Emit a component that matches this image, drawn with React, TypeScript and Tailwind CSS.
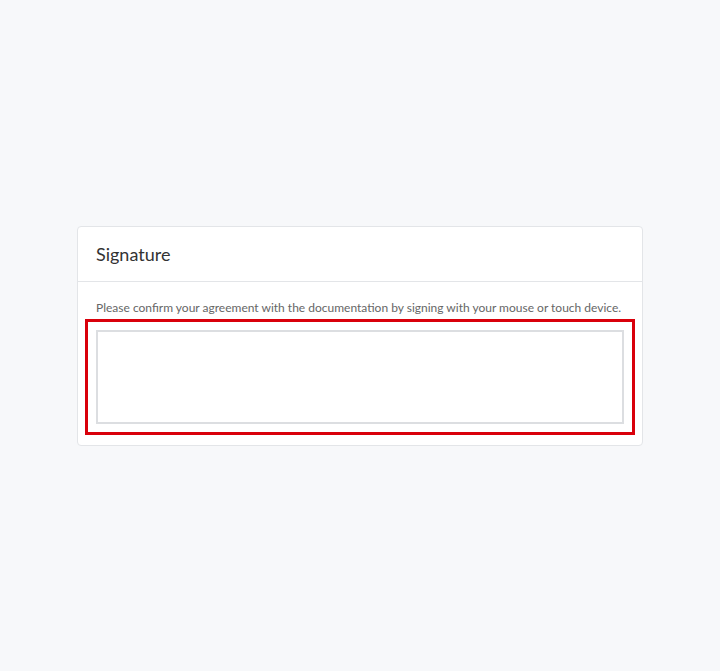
import React from 'react';

export default function App() {
  return (
    <div
      className="min-h-[671px] w-full bg-[#f7f8fa] flex items-center justify-center"
      style={{ fontFamily: 'Lato, "Open Sans", sans-serif' }}
    >
      <div className="w-[566px] bg-white border border-[#e3e5e8] rounded-[4px]">
        <div className="h-[55px] px-[18px] flex items-center border-b border-[#e3e5e8]">
          <h2 className="text-[18px] text-[#333] leading-none">Signature</h2>
        </div>
        <div className="px-[18px] pt-[18px] pb-[21px]">
          <p className="text-[12px] text-[#666] leading-[16px] mb-[14px]">
            Please confirm your agreement with the documentation by signing with your mouse or touch device.
          </p>
          <div className="h-[94px] border-2 border-[#dcdee1] bg-white outline-[3px] outline-solid outline-[#d9000b] outline-offset-[8px]" />
        </div>
      </div>
    </div>
  );
}
